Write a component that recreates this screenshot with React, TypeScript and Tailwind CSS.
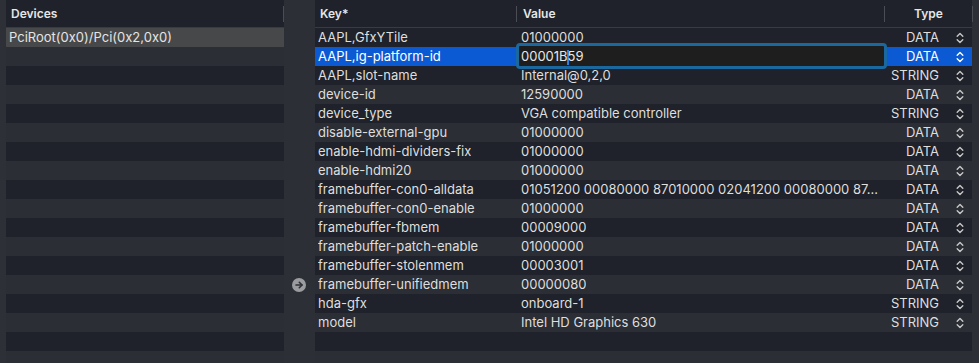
import React from "react";

const rows: [string, string, string][] = [
  ["AAPL,GfxYTile", "01000000", "DATA"],
  ["AAPL,ig-platform-id", "00001B59", "DATA"],
  ["AAPL,slot-name", "Internal@0,2,0", "STRING"],
  ["device-id", "12590000", "DATA"],
  ["device_type", "VGA compatible controller", "STRING"],
  ["disable-external-gpu", "01000000", "DATA"],
  ["enable-hdmi-dividers-fix", "01000000", "DATA"],
  ["enable-hdmi20", "01000000", "DATA"],
  ["framebuffer-con0-alldata", "01051200 00080000 87010000 02041200 00080000 87...", "DATA"],
  ["framebuffer-con0-enable", "01000000", "DATA"],
  ["framebuffer-fbmem", "00009000", "DATA"],
  ["framebuffer-patch-enable", "01000000", "DATA"],
  ["framebuffer-stolenmem", "00003001", "DATA"],
  ["framebuffer-unifiedmem", "00000080", "DATA"],
  ["hda-gfx", "onboard-1", "STRING"],
  ["model", "Intel HD Graphics 630", "STRING"],
  ["", "", ""],
  ["", "", ""],
];

function Chevrons({ white }: { white?: boolean }) {
  return (
    <svg width="8" height="12" viewBox="0 0 8 12" fill="none" stroke={white ? "#ffffff" : "#c8c8c8"} strokeWidth="1.4" strokeLinecap="round" strokeLinejoin="round">
      <path d="M1.2 4.2 L4 1.4 L6.8 4.2" />
      <path d="M1.2 7.8 L4 10.6 L6.8 7.8" />
    </svg>
  );
}

function HeaderDivider() {
  return <div className="w-px h-[16px] bg-[#4a4d54]" />;
}

export default function App() {
  const font = { fontFamily: "Inter, 'Liberation Sans', sans-serif" };
  return (
    <div className="flex w-[979px] h-[363px] overflow-hidden bg-[#2c2f36] text-[13px] text-[#dedede]" style={font}>
      <div className="w-[6px] shrink-0 bg-[#2d3037]" />
      {/* Devices panel */}
      <div className="w-[278px] shrink-0 flex flex-col bg-[#1f222a]">
        <div className="h-[28px] shrink-0 flex items-center border-b border-[#383b42] pl-[5px]">
          <span className="flex-1 text-[12px] font-semibold text-[#e6e6e6]">Devices</span>
          <HeaderDivider />
        </div>
        {Array.from({ length: 18 }).map((_, i) => (
          <div
            key={i}
            className={
              "h-[19px] shrink-0 flex items-center pl-[3px] pt-px " +
              (i === 0 ? "bg-[#474849]" : i % 2 === 1 ? "bg-[#2b2e35]" : "bg-[#1f222a]")
            }
          >
            {i === 0 ? <span className="text-[#e4e4e4]">PciRoot(0x0)/Pci(0x2,0x0)</span> : null}
          </div>
        ))}
      </div>
      {/* Gap with arrow */}
      <div className="w-[31px] shrink-0 flex flex-col items-center pt-[278px] pr-[2px]">
        <div className="w-[14px] h-[14px] rounded-full bg-[#9b9ca0] flex items-center justify-center">
          <svg width="10" height="10" viewBox="0 0 10 10" fill="none" stroke="#2c2f36" strokeWidth="1.6" strokeLinecap="round" strokeLinejoin="round">
            <path d="M2 5 H8" />
            <path d="M5.3 2.3 L8 5 L5.3 7.7" />
          </svg>
        </div>
      </div>
      {/* Properties table */}
      <div className="w-[657px] shrink-0 flex flex-col bg-[#1f222a]">
        <div className="h-[28px] shrink-0 flex items-center border-b border-[#383b42] text-[12px] font-semibold text-[#e6e6e6]">
          <div className="w-[202px] flex items-center pl-[5px]">
            <span className="flex-1">Key*</span>
            <HeaderDivider />
          </div>
          <div className="w-[368px] flex items-center pl-[6px]">
            <span className="flex-1">Value</span>
            <HeaderDivider />
          </div>
          <div className="w-[87px] flex items-center justify-center">
            <span>Type</span>
          </div>
        </div>
        {rows.map(([k, v, t], i) => {
          const sel = i === 1;
          const bg = i % 2 === 1 ? "bg-[#2b2e35]" : "bg-[#1f222a]";
          return (
            <div key={i} className={"h-[19px] shrink-0 flex items-center " + bg}>
              <div className={"w-[202px] h-full flex items-center pl-[3px] pt-px " + (sel ? "bg-[#0b5ad3] text-white" : "")}>
                <span className="whitespace-nowrap overflow-hidden">{k}</span>
              </div>
              <div className="relative w-[368px] h-full flex items-center pl-[4px] pt-px">
                {sel ? (
                  <div className="absolute left-[-1px] top-[-4px] w-[371px] h-[26px] rounded-[4px] border-[3px] border-[#1b689f] bg-[#1e1e1e] flex items-center pl-[2px] pt-px">
                    <span className="text-[#e8e8e8] whitespace-nowrap">
                      00001B
                      <span className="inline-block w-[2px] h-[15px] align-middle bg-[#2f7fe0] -mx-[1px]" />
                      59
                    </span>
                  </div>
                ) : (
                  <span className="whitespace-nowrap overflow-hidden">{v}</span>
                )}
              </div>
              <div className={"w-[87px] h-full flex items-center justify-end pr-[8px] gap-[17px] pt-px " + (sel ? "bg-[#0b5ad3] text-white" : "")}>
                {t ? (
                  <>
                    <span>{t}</span>
                    <Chevrons white={sel} />
                  </>
                ) : null}
              </div>
            </div>
          );
        })}
      </div>
      <div className="w-[7px] shrink-0 flex flex-col">
        <div className="h-[28px] flex items-center">
          <HeaderDivider />
        </div>
      </div>
    </div>
  );
}
